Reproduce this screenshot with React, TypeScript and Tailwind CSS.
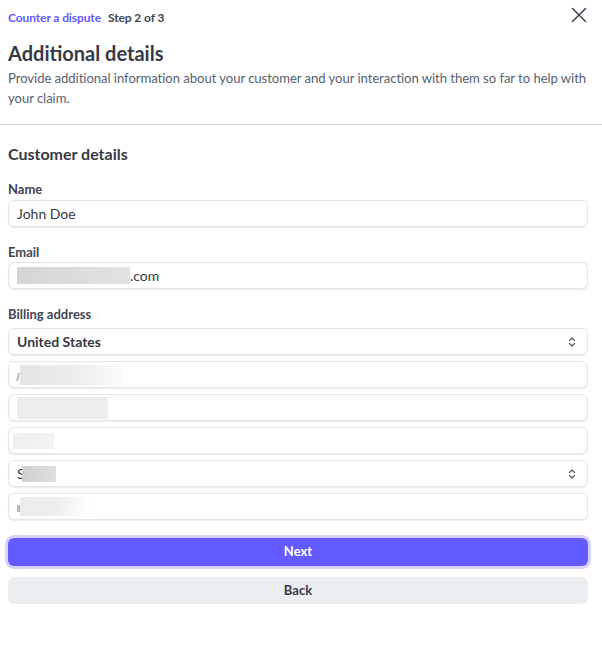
import { X } from "lucide-react";

function Redact({ w, h, className = "" }: { w: string; h: string; className?: string }) {
  return <span className={`inline-block shrink-0 ${w} ${h} ${className}`} />;
}

function Field({ children, select = false }: { children?: React.ReactNode; select?: boolean }) {
  return (
    <div className="flex items-center h-[27px] pl-2 pr-[9px] rounded-md border border-[#e3e5e8] shadow-[0_1px_1px_rgba(0,0,0,0.08)] bg-white text-[14px] text-[#353a44]">
      <div className="flex-1 flex items-center">{children}</div>
      {select && (
        <svg width="12" height="12" viewBox="0 0 12 12" className="text-[#545969]" fill="none" stroke="currentColor" strokeWidth="1.3" strokeLinecap="round" strokeLinejoin="round">
          <path d="M3.5 4.5 6 2l2.5 2.5M3.5 7.5 6 10l2.5-2.5" />
        </svg>
      )}
    </div>
  );
}

export default function App() {
  return (
    <div className="w-[602px] h-[649px] bg-white font-['Lato',sans-serif] text-[#353a44]">
      <div className="px-2 pt-[9px]">
        <div className="flex items-center justify-between">
          <div className="flex items-center gap-[7px] text-[12px] font-bold tracking-[-0.1px]">
            <span className="text-[#635bff]">Counter a dispute</span>
            <span className="text-[#414552]">Step 2 of 3</span>
          </div>
          <X className="w-[26px] h-[26px] text-[#414552] mr-[2px] -my-[6px] -translate-y-[3px]" strokeWidth={1.4} />
        </div>
        <h1 className="mt-[13px] text-[20px] font-bold leading-[26px] text-[#353a44]">Additional details</h1>
        <p className="mt-[2px] text-[13.1px] leading-[20px] text-[#596171] tracking-[-0.05px]">
          <span className="whitespace-nowrap">
            Provide additional information about your customer and your interaction with them so far to help with
          </span>
          <br />
          your claim.
        </p>
      </div>
      <div className="mt-[16px] border-t border-[#d5dbe1]" />
      <div className="pl-2 pr-[14px] pt-[18px]">
        <h2 className="text-[16px] font-bold leading-[22px]">Customer details</h2>
        <div className="mt-[15px] text-[13px] font-bold leading-[18px] text-[#414552]">Name</div>
        <div className="mt-[2px]">
          <Field>John Doe</Field>
        </div>
        <div className="mt-[16px] text-[13px] font-bold leading-[18px] text-[#414552]">Email</div>
        <div className="mt-[1px]">
          <Field>
            <Redact w="w-[113px]" h="h-[17px]" className="bg-gradient-to-r from-[#d4d4d4] via-[#dcdcdc] to-[#e2e2e2]" />
            <span>.com</span>
          </Field>
        </div>
        <div className="mt-[16px] text-[13px] font-bold leading-[18px] text-[#414552]">Billing address</div>
        <div className="mt-[5px] flex flex-col gap-[6px]">
          <Field select>
            <span className="font-bold">United States</span>
          </Field>
          <Field>
            <Redact w="w-[2px]" h="h-[8px]" className="mt-[4px] bg-[#b5b9c0] -skew-x-12" />
            <Redact w="w-[103px]" h="h-[20px]" className="ml-[1px] bg-gradient-to-r from-[#e4e4e4] via-[#ececec] to-[#fbfbfb]" />
          </Field>
          <Field>
            <Redact w="w-[91px]" h="h-[22px]" className="bg-[#ececec]" />
          </Field>
          <Field>
            <Redact w="w-[41px]" h="h-[16px]" className="-ml-[4px] bg-gradient-to-r from-[#efefef] to-[#f3f3f3]" />
          </Field>
          <Field select>
            <span className="text-[#353a44]">S</span>
            <Redact w="w-[34px]" h="h-[16px]" className="-ml-[3px] bg-gradient-to-r from-[#d0d0d0] to-[#dedede]" />
          </Field>
          <Field>
            <Redact w="w-[3px]" h="h-[7px]" className="mt-[3px] bg-[#b5b9c0]" />
            <Redact w="w-[71px]" h="h-[19px]" className="bg-gradient-to-r from-[#ececec] via-[#eeeeee] to-[#ffffff]" />
          </Field>
        </div>
        <button className="mt-[18px] w-full h-[28px] rounded-md bg-[#635bff] text-white text-[13px] font-bold ring-[3px] ring-[#d5d3ff]">
          Next
        </button>
        <button className="mt-[11px] w-full h-[27px] rounded-md bg-[#ebeef1] text-[#353a44] text-[13px] font-bold">
          Back
        </button>
      </div>
    </div>
  );
}
